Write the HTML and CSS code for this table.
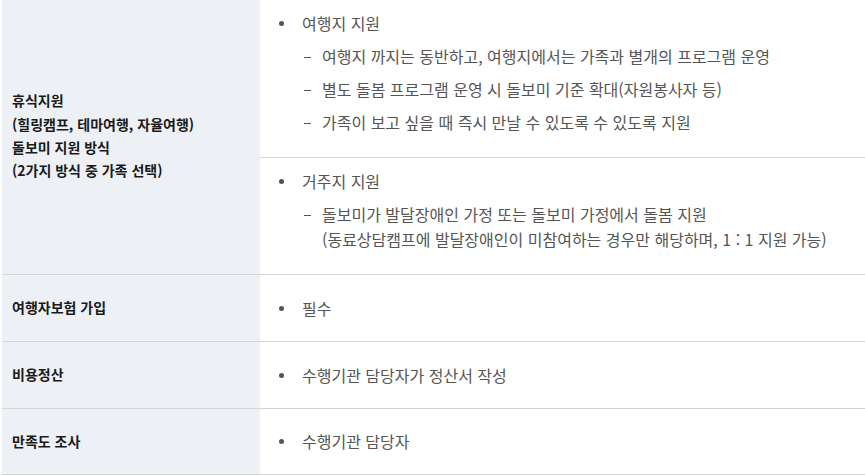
FILE: index.html
```html
<!DOCTYPE html>
<html lang="ko">
<head>
<meta charset="utf-8">
<link rel="stylesheet" href="styles.css">
</head>
<body>
<table class="info">
  <tbody>
    <tr>
      <th rowspan="2" class="head head-tall">휴식지원<br>(힐링캠프, 테마여행, 자율여행)<br>돌보미 지원 방식<br>(2가지 방식 중 가족 선택)</th>
      <td class="cell">
        <ul class="list">
          <li class="item">
            <div class="item-body">
              <span>여행지 지원</span>
              <ul class="sub">
                <li class="sub-item">여행지 까지는 동반하고, 여행지에서는 가족과 별개의 프로그램 운영</li>
                <li class="sub-item">별도 돌봄 프로그램 운영 시 돌보미 기준 확대(자원봉사자 등)</li>
                <li class="sub-item">가족이 보고 싶을 때 즉시 만날 수 있도록 수 있도록 지원</li>
              </ul>
            </div>
          </li>
        </ul>
      </td>
    </tr>
    <tr>
      <td class="cell">
        <ul class="list">
          <li class="item">
            <div class="item-body">
              <span>거주지 지원</span>
              <ul class="sub">
                <li class="sub-item"><span>돌보미가 발달장애인 가정 또는 돌보미 가정에서 돌봄 지원<br>(동료상담캠프에 발달장애인이 미참여하는 경우만 해당하며, 1 : 1 지원 가능)</span></li>
              </ul>
            </div>
          </li>
        </ul>
      </td>
    </tr>
    <tr class="short">
      <th class="head">여행자보험 가입</th>
      <td class="cell"><ul class="list"><li class="item">필수</li></ul></td>
    </tr>
    <tr class="short">
      <th class="head">비용정산</th>
      <td class="cell"><ul class="list"><li class="item">수행기관 담당자가 정산서 작성</li></ul></td>
    </tr>
    <tr class="short last">
      <th class="head">만족도 조사</th>
      <td class="cell"><ul class="list"><li class="item">수행기관 담당자</li></ul></td>
    </tr>
  </tbody>
</table>
</body>
</html>
```
FILE: styles.css
```css
html, body {
  margin: 0;
  padding: 0;
  background: #ffffff;
}

body {
  font-family: "Noto Sans CJK KR", "Noto Sans", sans-serif;
  font-size: 16px;
  color: #555555;
  overflow: hidden;
}

.info {
  margin: 0 0 0 2px;
  width: 870px;
  border-collapse: collapse;
  table-layout: fixed;
}

.head {
  width: 248px;
  padding: 0 0 0 10px;
  background: #edf1f6;
  color: #1a1a1a;
  font-weight: 700;
  font-size: 14px;
  line-height: 23.3px;
  text-align: left;
  vertical-align: middle;
  border-bottom: 1px solid #d5d5d5;
}

.head-tall {
  padding-bottom: 2px;
}

.cell {
  padding: 11px 0 22px 19px;
  vertical-align: top;
  border-bottom: 1px solid #d5d5d5;
  line-height: 25px;
}

.short .cell {
  height: 66px;
  padding: 0 0 0 19px;
  vertical-align: middle;
  box-sizing: border-box;
}

.short .head {
  height: 66px;
}

.last .cell,
.last .head {
  height: 65px;
}

.list,
.sub {
  list-style: none;
  margin: 0;
  padding: 0;
}

.item {
  display: flex;
  align-items: flex-start;
}

.item::before {
  content: "";
  flex: none;
  width: 5px;
  height: 5px;
  border-radius: 50%;
  background: #555555;
  margin: 10px 18px 0 0;
}

.item-body {
  display: flex;
  flex-direction: column;
}

.sub {
  margin-left: 2px;
}

.sub-item {
  display: flex;
  margin-top: 8px;
}

.sub-item::before {
  content: "";
  flex: none;
  width: 7px;
  height: 1px;
  background: #555555;
  margin: 13px 11px 0 0;
}
```
